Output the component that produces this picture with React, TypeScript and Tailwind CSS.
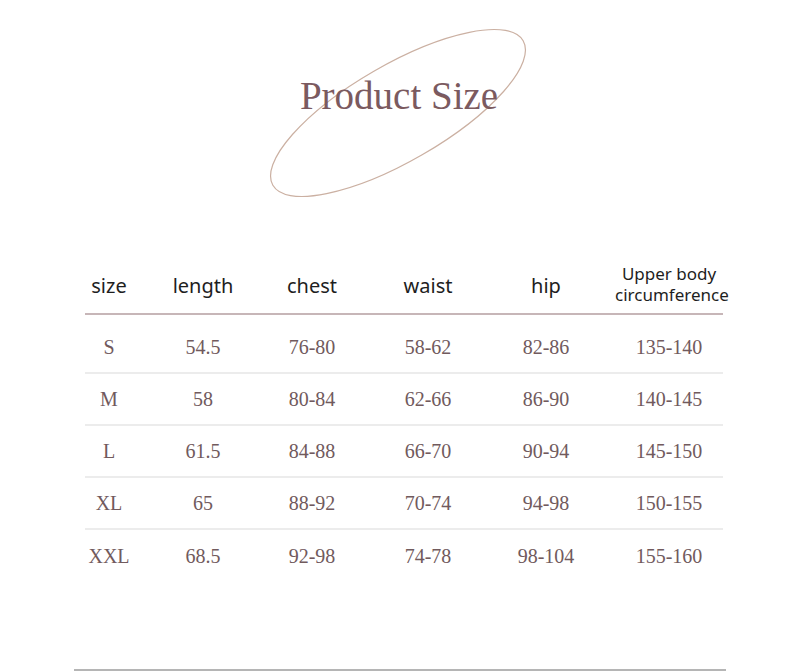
const headers = ['size', 'length', 'chest', 'waist', 'hip'];

const rows = [
  ['S', '54.5', '76-80', '58-62', '82-86', '135-140'],
  ['M', '58', '80-84', '62-66', '86-90', '140-145'],
  ['L', '61.5', '84-88', '66-70', '90-94', '145-150'],
  ['XL', '65', '88-92', '70-74', '94-98', '150-155'],
  ['XXL', '68.5', '92-98', '74-78', '98-104', '155-160'],
];

const grid = 'grid grid-cols-[48px_140px_78px_154px_82px_136px] items-center';

export default function App() {
  return (
    <div className="w-[790px] h-[672px] bg-white overflow-hidden">
      {/* Title with oval */}
      <div className="relative h-[259px]">
        <svg
          className="absolute left-[248px] top-[13px]"
          width="300"
          height="200"
          viewBox="0 0 300 200"
        >
          <ellipse
            cx="150"
            cy="100"
            rx="144.5"
            ry="48.3"
            transform="rotate(-30 150 100)"
            fill="none"
            stroke="#cbb0a2"
            strokeWidth="1.2"
          />
        </svg>
        <div className="relative flex justify-center pt-[76px] pl-[8px]">
          <h1 className="font-['Liberation_Serif',serif] text-[39px] leading-none text-[#7b5a5f]">
            Product Size
          </h1>
        </div>
      </div>

      {/* Size table */}
      <div className="ml-[85px] w-[638px]">
        <div className={`${grid} h-[56px] border-b-2 border-[#c7b6b8] font-['Noto_Sans',sans-serif] text-[#1e1e1e] text-center`}>
          {headers.map(h => (
            <div key={h} className="text-[20px]">{h}</div>
          ))}
          <div className="pl-[28px] mb-[5px] text-[17px] leading-[21px]">
            Upper body
            <br />
            circumference
          </div>
        </div>

        {rows.map((r, i) => (
          <div
            key={r[0]}
            className={`${grid} ${i === 0 ? 'h-[59px] pt-[7px]' : 'h-[52px]'} ${
              i < rows.length - 1 ? 'border-b-2 border-[#ececec]' : ''
            } font-['Liberation_Serif',serif] text-[20px] text-[#715a5d] text-center`}
          >
            {r.map((v, j) => (
              <div key={j} className={j === 5 ? 'pl-[28px]' : ''}>{v}</div>
            ))}
          </div>
        ))}
      </div>

      <div className="ml-[74px] mt-[87px] w-[652px] h-[2px] bg-[#b5b5b5]" />
    </div>
  );
}
